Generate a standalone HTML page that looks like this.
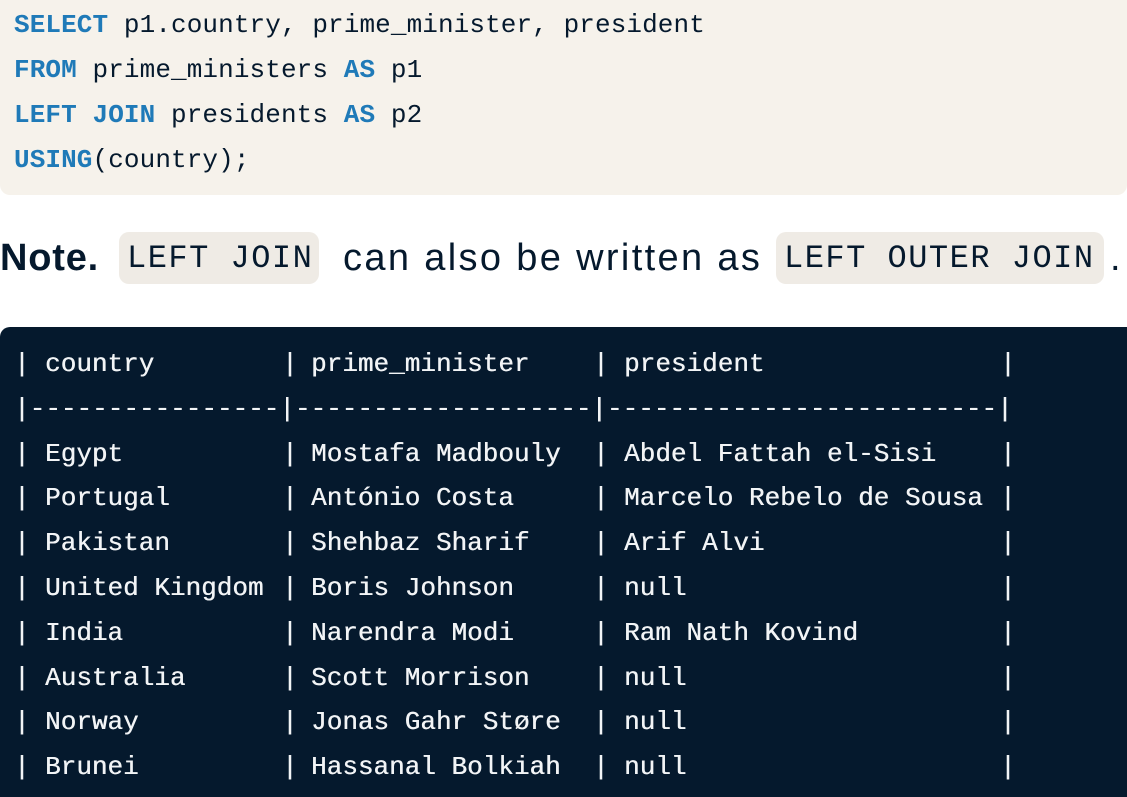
<!DOCTYPE html>
<html><head><meta charset="utf-8"><style>
body{margin:0;width:1127px;height:788px;overflow:hidden;background:#fff;position:relative;font-family:"Liberation Sans",sans-serif}
.code{position:absolute;left:0;top:-10px;width:1127px;height:205px;background:#f6f2eb;border-radius:10px}
.cl{position:absolute;left:14px;font-family:"Liberation Mono",monospace;font-size:26px;color:#05192d;white-space:pre;line-height:30px;letter-spacing:0.1px}
.k{color:#1f7ab8;font-weight:bold}
.note{position:absolute;top:236px;left:0;font-size:38px;color:#05192d;white-space:pre;line-height:44px;letter-spacing:2.35px}
.ic{position:absolute;top:232px;height:52px;background:#efebe5;border-radius:10px;font-family:"Liberation Mono",monospace;font-size:32px;line-height:54px;color:#05192d;letter-spacing:1.5px;padding-left:8px;box-sizing:border-box}
.dark{position:absolute;left:0;top:327px;width:1127px;height:470px;background:#05192d;border-radius:10px 0 0 0}
.r{position:absolute;left:0;height:30px;width:1127px;font-family:"Liberation Mono",monospace;font-size:26px;color:#f2f4f6;line-height:30px;white-space:pre;text-shadow:0.4px 0 0 #f2f4f6}
.r span{position:absolute;top:0}
</style></head><body>
<div class="code"></div>
<div class="cl" style="top:10px"><span class="k">SELECT</span> p1.country, prime_minister, president</div>
<div class="cl" style="top:55px"><span class="k">FROM</span> prime_ministers <span class="k">AS</span> p1</div>
<div class="cl" style="top:100px"><span class="k">LEFT JOIN</span> presidents <span class="k">AS</span> p2</div>
<div class="cl" style="top:145px"><span class="k">USING</span>(country);</div>

<div class="note" style="letter-spacing:0.8px"><b>Note.</b></div>
<div class="ic" style="left:119px;width:200px">LEFT JOIN</div>
<div class="note" style="left:343px">can also be written as</div>
<div class="ic" style="left:776px;width:328px">LEFT OUTER JOIN</div>
<div class="note" style="left:1110px">.</div>

<div class="dark"></div>
<div id="rows"></div>
<script>
var rows=[["country","prime_minister","president"],null,["Egypt","Mostafa Madbouly","Abdel Fattah el-Sisi"],["Portugal","António Costa","Marcelo Rebelo de Sousa"],["Pakistan","Shehbaz Sharif","Arif Alvi"],["United Kingdom","Boris Johnson","null"],["India","Narendra Modi","Ram Nath Kovind"],["Australia","Scott Morrison","null"],["Norway","Jonas Gahr Støre","null"],["Brunei","Hassanal Bolkiah","null"]];
var h="";
rows.forEach(function(r,i){
 var top=349+i*44.8;
 if(!r){
  h+='<div class="r" style="top:'+top+'px"><span style="left:14px;letter-spacing:0">|'+"-".repeat(16)+'|'+"-".repeat(19)+'|'+"-".repeat(25)+'|</span></div>';
  return;}
 h+='<div class="r" style="top:'+top+'px"><span style="left:14px">|</span><span style="left:45px">'+r[0]+'</span><span style="left:282px">|</span><span style="left:311px">'+r[1]+'</span><span style="left:593px">|</span><span style="left:624px">'+r[2]+'</span><span style="left:1000px">|</span></div>';
});
document.getElementById("rows").innerHTML=h;
</script>
</body></html>
